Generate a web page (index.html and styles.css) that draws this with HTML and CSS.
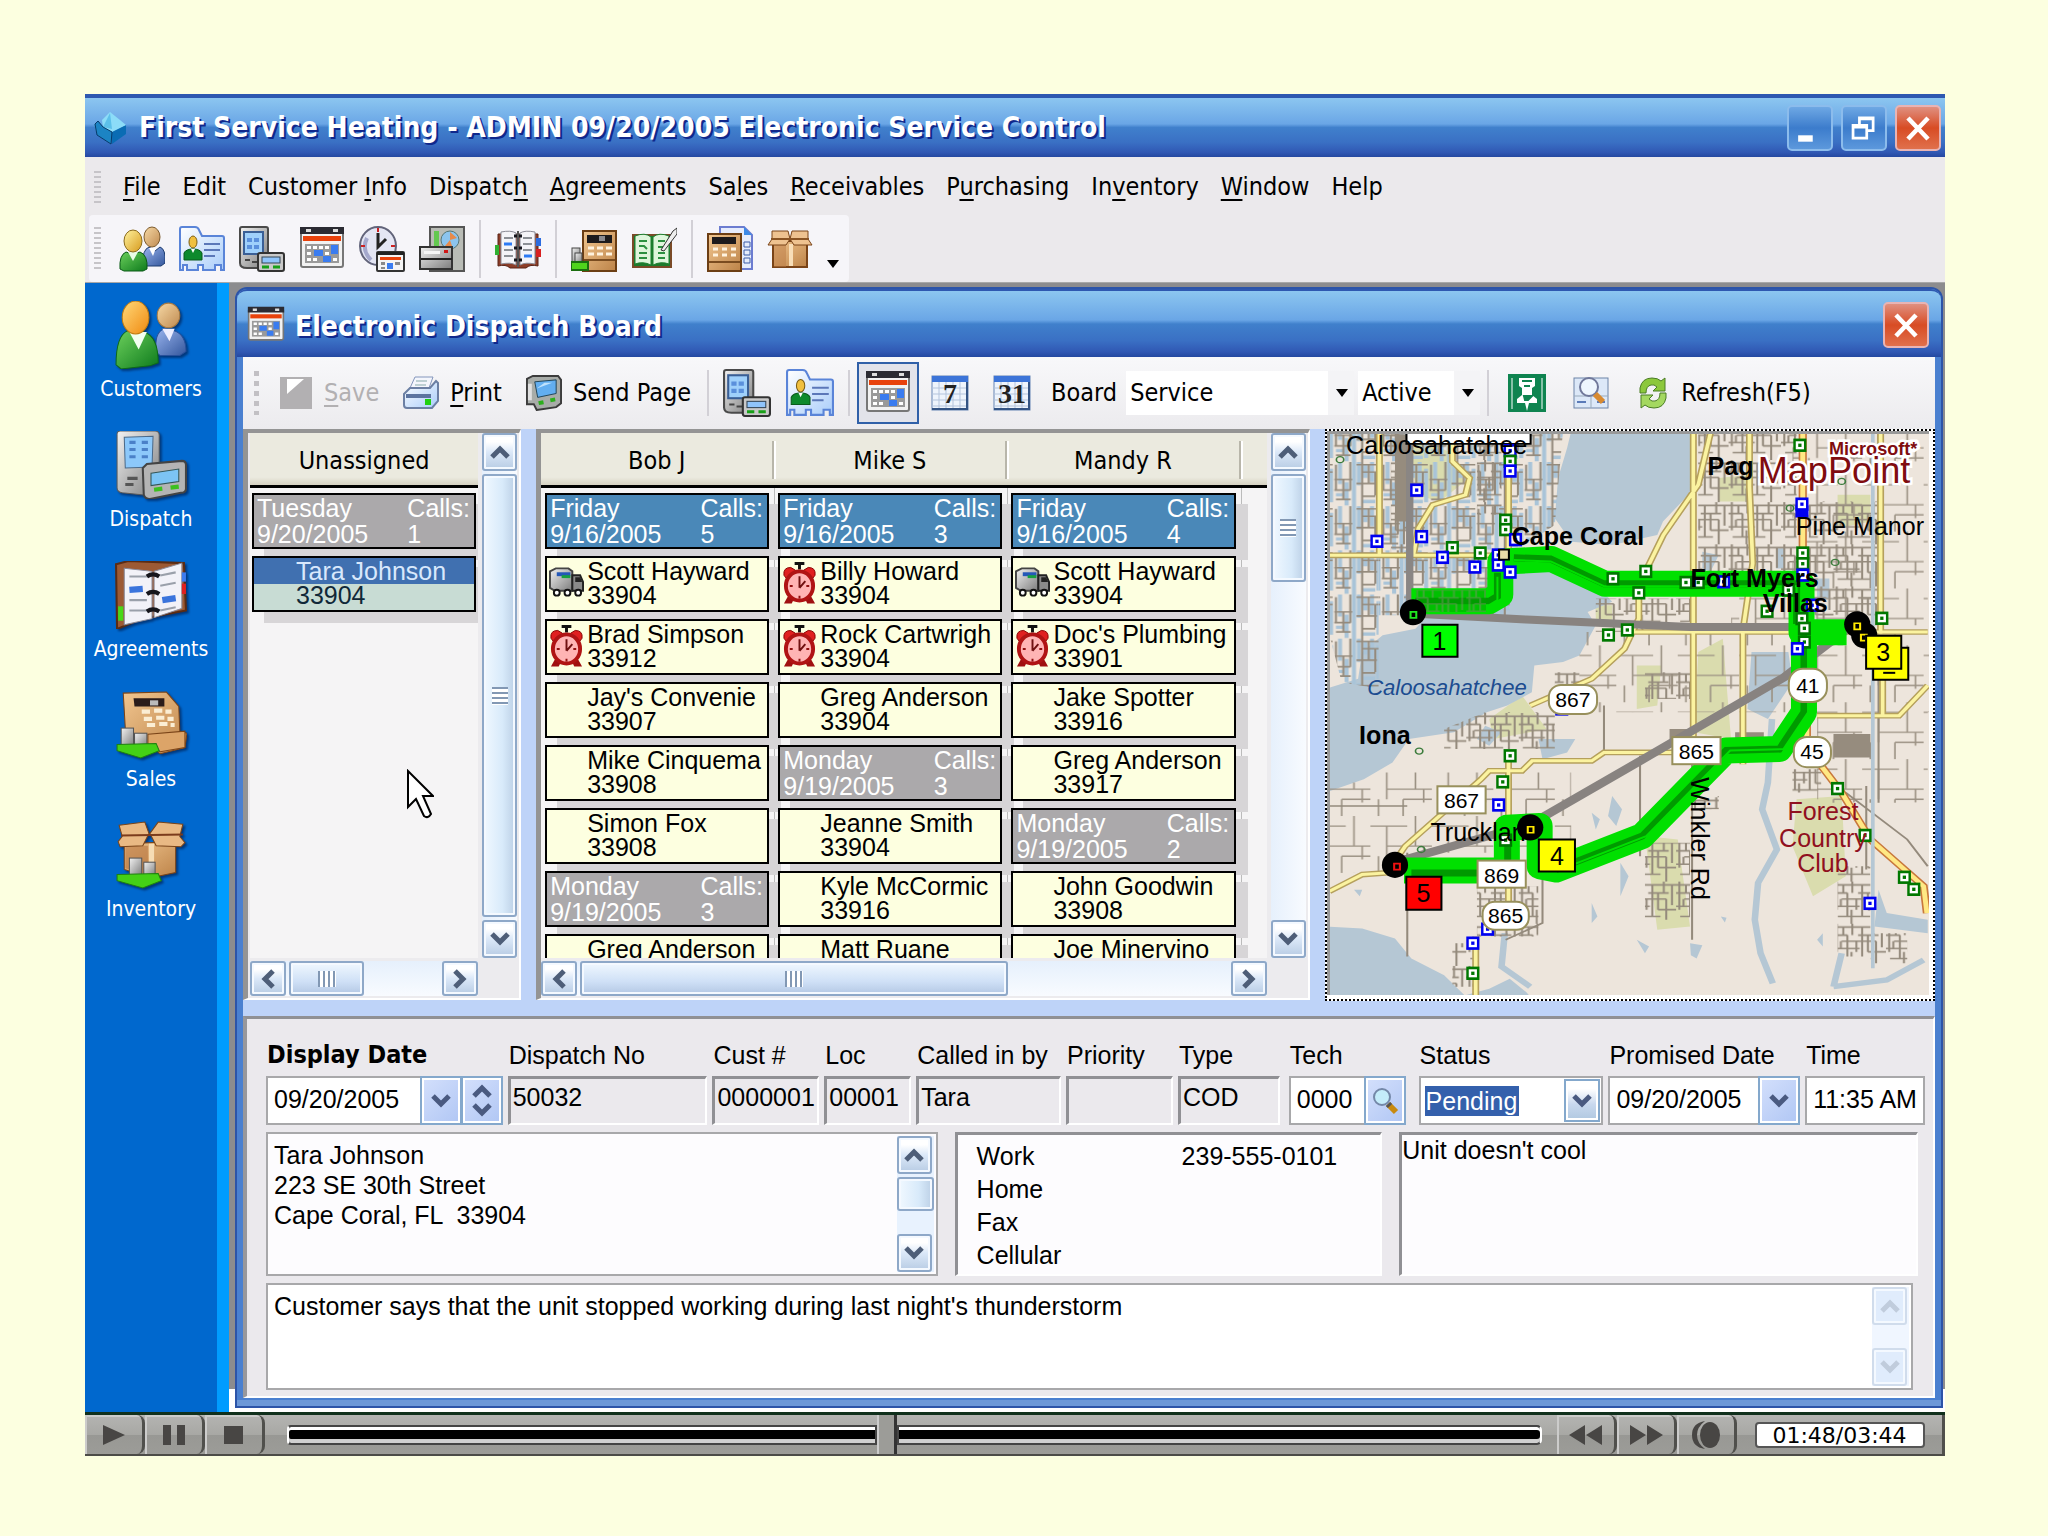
FILE: index.html
```html
<!DOCTYPE html>
<html lang="en">
<head>
<meta charset="utf-8">
<title>First Service Heating - Electronic Service Control</title>
<link rel="stylesheet" href="styles.css">
</head>
<body>
<svg class="defs" aria-hidden="true">
  <defs>
    <linearGradient id="gold" x1="0" y1="0" x2="1" y2="1"><stop offset="0" stop-color="#fff3a0"/><stop offset="1" stop-color="#d79a1c"/></linearGradient>
    <linearGradient id="orange" x1="0" y1="0" x2="1" y2="1"><stop offset="0" stop-color="#ffd97a"/><stop offset="1" stop-color="#f08a10"/></linearGradient>
    <linearGradient id="skin" x1="0" y1="0" x2="1" y2="1"><stop offset="0" stop-color="#f6d9a6"/><stop offset="1" stop-color="#c08a50"/></linearGradient>
    <linearGradient id="green" x1="0" y1="0" x2="1" y2="1"><stop offset="0" stop-color="#6cd05c"/><stop offset="1" stop-color="#0d7a1c"/></linearGradient>
    <linearGradient id="coat" x1="0" y1="0" x2="1" y2="1"><stop offset="0" stop-color="#9ab4ee"/><stop offset="1" stop-color="#34579c"/></linearGradient>
    <linearGradient id="card" x1="0" y1="0" x2="1" y2="1"><stop offset="0" stop-color="#ffffff"/><stop offset="1" stop-color="#a9cdfa"/></linearGradient>
    <linearGradient id="steel" x1="0" y1="0" x2="1" y2="1"><stop offset="0" stop-color="#f2f2f2"/><stop offset="1" stop-color="#7c7c7c"/></linearGradient>
    <linearGradient id="wood" x1="0" y1="0" x2="1" y2="1"><stop offset="0" stop-color="#f1c690"/><stop offset="1" stop-color="#bd8348"/></linearGradient>
  </defs>
  <symbol id="i-people" viewBox="0 0 46 46">
    <path d="M24 38q-1-14 6-17l6 4 5-4q6 2 5 16l-4 3H26z" fill="url(#coat)" stroke="#1d3c70"/>
    <ellipse cx="33" cy="11" rx="8" ry="10" fill="url(#skin)" stroke="#7c5a2c"/>
    <path d="M30 22l4 8 3-8z" fill="#fff"/>
    <path d="M1 43Q0 29 7 26l6 2 8-2q8 3 7 17l-4 2H5z" fill="url(#green)" stroke="#0a5a16"/>
    <path d="M9 26l5 9 5-9z" fill="#e8fbe6"/>
    <ellipse cx="14" cy="15" rx="9" ry="11" fill="url(#gold)" stroke="#8a6a1c"/>
  </symbol>
  <symbol id="i-idcard" viewBox="0 0 46 46">
    <path d="M1 3q0-2 2-2h13q3 0 4 3l3 6h20q2 0 2 2v32h-3v-5h-6v5H24v-5h-5v5H8v-5H4v5H1z" fill="url(#card)" stroke="#5a84d8" stroke-width="2"/>
    <ellipse cx="14" cy="16" rx="4" ry="6" fill="#f0c040" stroke="#7a5c14"/>
    <path d="M5 34V27q2-4 9-4t9 4v7z" fill="#0d8a2c" stroke="#0a5a1c"/><path d="M12 23l2 4 2-4z" fill="#fff"/>
    <path d="M25 18h16M25 24h16M25 30h11" stroke="#5b77b8" stroke-width="2"/>
  </symbol>
  <symbol id="i-pda" viewBox="0 0 46 46">
    <path d="M1 3q0-2 2-2h24q2 0 2 2v34q0 5-5 5H8q-7 0-7-5z" fill="url(#steel)" stroke="#4a4a4a" stroke-width="2"/>
    <rect x="5" y="6" width="19" height="22" fill="#9fd0fb" stroke="#3a5f96" stroke-width="2"/>
    <path d="M8 12h5v4H8zM15 12h5v4h-5zM8 19h5v4H8zM15 19h5v4h-5z" fill="#5b90dc"/>
    <path d="M6 34h5M13 36h6" stroke="#444" stroke-width="2"/>
    <rect x="19" y="27" width="26" height="18" rx="2" fill="#c9c9c9" stroke="#333" stroke-width="2"/>
    <rect x="23" y="31" width="18" height="6" fill="#8fc4fb" stroke="#345" />
    <path d="M23 41h7M34 41h7" stroke="#18a018" stroke-width="3"/>
  </symbol>
  <symbol id="i-calendar" viewBox="0 0 46 46">
    <rect x="2" y="3" width="42" height="38" rx="2" fill="#f2f2f2" stroke="#777" stroke-width="2"/>
    <path d="M1 1h44v7H1z" fill="#2b2b33"/><path d="M7 3h5v3H7zM34 3h5v3h-5z" fill="#ddd"/>
    <rect x="4" y="10" width="38" height="5" fill="#e8420c"/>
    <rect x="6" y="18" width="34" height="19" fill="#9a9a9a"/>
    <path d="M8 20h4v3H8zM14 20h4v3h-4zM20 20h4v3h-4zM26 20h4v3h-4zM8 26h4v3H8zM26 26h4v3h-4zM8 32h4v3H8zM14 32h4v3h-4zM34 32h4v3h-4z" fill="#fff"/>
    <path d="M15 24h9v6h-9zM32 19h7v9h-7zM24 30h8v6h-8z" fill="#3a7cf0"/>
  </symbol>
  <symbol id="i-clock" viewBox="0 0 46 46">
    <ellipse cx="19" cy="20" rx="18" ry="19" fill="#e4e6f4" stroke="#62647a" stroke-width="2"/>
    <path d="M8 12Q2 24 12 34" stroke="#a4a8cc" stroke-width="4" fill="none"/>
    <path d="M19 7v14l8-8" stroke="#222" stroke-width="3" fill="none"/>
    <path d="M19 2v4M2 20h4M32 20h4" stroke="#c22" stroke-width="2"/>
    <rect x="18" y="26" width="27" height="19" rx="1" fill="#f4f4f4" stroke="#333" stroke-width="2"/>
    <path d="M18 26h27v3H18z" fill="#222"/><path d="M21 31h21v3H21z" fill="#e8420c"/>
    <path d="M22 36h4v3h-4zM22 41h4v2h-4zM36 36h5v3h-5z" fill="#8a8a8a"/><path d="M28 37h6v6h-6z" fill="#3a7cf0"/>
  </symbol>
  <symbol id="i-report" viewBox="0 0 46 46">
    <rect x="11" y="1" width="34" height="44" fill="#b9bcb6" stroke="#555" stroke-width="2"/>
    <rect x="15" y="5" width="5" height="22" fill="#63c850"/>
    <circle cx="31" cy="14" r="9" fill="#8cc4ee" stroke="#577"/><path d="M31 14V6l7 6zM31 14l-5 6 8 3z" fill="#e88a4a"/>
    <path d="M1 21h32v22H1z" fill="url(#steel)" stroke="#333" stroke-width="2"/>
    <path d="M5 25h16v3H5z" fill="#f6f6f6"/><path d="M25 24h4v3h-4z" fill="#d01818"/><path d="M2 33h31" stroke="#222" stroke-width="2"/>
  </symbol>
  <symbol id="i-book" viewBox="0 0 46 46">
    <path d="M3 8h40v32q-8-2-12 2H15q-4-4-12-2z" fill="#8c3d28" stroke="#5a2416"/>
    <path d="M6 6q10-2 15 1v32q-5-3-15-1zM40 6Q30 4 25 7v32q5-3 15-1z" fill="#f4f4f8" stroke="#8a8a94"/>
    <path d="M9 12h9M9 24h9M9 30h9M28 12h9M28 18h9M28 24h9" stroke="#8c9096" stroke-width="2"/>
    <path d="M9 18h8M29 30h8" stroke="#2c7af4" stroke-width="3"/>
    <path d="M19 10h8M19 22h8M19 34h8" stroke="#16161c" stroke-width="3"/><path d="M23 5v36" stroke="#555" stroke-width="2"/>
    <path d="M41 12h5v8h-5z" fill="#2c6ce0"/><path d="M41 23h5v8h-5z" fill="#d82020"/><path d="M0 19h4v10H0z" fill="#30b030"/>
  </symbol>
  <symbol id="i-register" viewBox="0 0 46 46">
    <path d="M12 5h33v40H12z" fill="url(#wood)" stroke="#6c3e14" stroke-width="2"/>
    <rect x="16" y="9" width="25" height="8" fill="#1d1a1c"/><path d="M28 10h6v5h-6z" fill="#8a8a90"/>
    <path d="M17 22h6M26 22h6M35 22h6M17 28h6M26 28h6M35 28h6" stroke="#fff3e0" stroke-width="3"/>
    <path d="M13 34h31" stroke="#7a4c20" stroke-width="2"/>
    <rect x="1" y="22" width="8" height="14" fill="url(#steel)" stroke="#444"/><rect x="4" y="27" width="7" height="10" fill="url(#steel)" stroke="#444"/>
    <path d="M0 36h17v8H0z" fill="#4fd41c" stroke="#1b6e10" stroke-width="2"/>
  </symbol>
  <symbol id="i-ledger" viewBox="0 0 46 46">
    <path d="M2 9h38v32H2z" fill="#1c7a2c" stroke="#7a4a28" stroke-width="2"/>
    <path d="M4 10q10-4 16 1v28q-8-4-16-1zM38 10q-10-4-16 1v28q8-4 16-1z" fill="#dff6dc" stroke="#1d8030"/>
    <path d="M8 15h8M8 20h5l3 3M8 27h8M8 32h8M27 15h7M27 21h5M27 27h7M27 32h7" stroke="#2c9040" stroke-width="2" fill="none"/>
    <path d="M30 24L42 5l4-3v6L33 25z" fill="#eee" stroke="#333"/>
  </symbol>
  <symbol id="i-invoice" viewBox="0 0 46 46">
    <path d="M13 1h24l8 8v34H13z" fill="#e6ecfc" stroke="#6c7cd0" stroke-width="2"/><path d="M37 1v8h8z" fill="#3c8ae8"/>
    <path d="M37 16h6v5h-6zM37 24h6v5h-6zM37 32h6v5h-6z" fill="none" stroke="#3c5ca8"/>
    <path d="M1 8h33v37H1z" fill="url(#wood)" stroke="#6c3e14" stroke-width="2"/>
    <rect x="5" y="11" width="24" height="7" fill="#1d1a1c"/>
    <path d="M6 23h5M15 23h5M24 23h5M6 29h5M15 29h5M24 29h5" stroke="#fff3e0" stroke-width="3"/><path d="M2 36h31" stroke="#7a4c20" stroke-width="2"/>
  </symbol>
  <symbol id="i-box" viewBox="0 0 46 46">
    <path d="M6 15h34v26H6z" fill="url(#wood)" stroke="#7a4418" stroke-width="2"/><path d="M7 17h12v24H7z" fill="#b97a44" opacity=".5"/>
    <path d="M5 5h16l2 8-4 6H1l4-6zM41 5H25l-2 8 4 6h18l-4-6z" fill="#eec290" stroke="#7a4418"/>
    <path d="M4 13h38" stroke="#8a5424" stroke-width="2"/><path d="M22 18h4v22h-4z" fill="#f8deb8"/>
  </symbol>
  <symbol id="i-register-lg" viewBox="0 0 70 66">
    <path d="M8 2l42-1 12 14 1 24 7 2-2 14-24 6L10 36z" fill="url(#wood)" stroke="#7a4418"/>
    <path d="M18 7h30v8H19z" fill="#2b1c1a"/><path d="M34 9h8v5h-8z" fill="#bbb"/>
    <path d="M26 20h8M38 19h8M49 20h6M28 27h8M40 26h8M51 27h6M31 33h8M43 32h8M54 33h4" stroke="#fbeed4" stroke-width="4"/>
    <path d="M32 42l36-3v16l-24 4-12-6z" fill="#dca468" stroke="#7a4418"/>
    <rect x="6" y="36" width="12" height="18" fill="url(#steel)" stroke="#555"/><rect x="19" y="41" width="12" height="14" fill="url(#steel)" stroke="#555"/>
    <path d="M2 52l38-1 3 7-18 7L2 58z" fill="#44d016" stroke="#1f8010"/>
  </symbol>
  <symbol id="i-box-lg" viewBox="0 0 70 66">
    <path d="M9 22l50-2v30l-24 5-26-8z" fill="url(#wood)" stroke="#7a4418"/>
    <path d="M10 24h22v28l-22-6z" fill="#b3703a" opacity=".55"/><path d="M33 22h5v30h-5z" fill="#f6dcb4"/>
    <path d="M4 4l25-3 4 11-6 12-22 1-2-5 4-5zM66 3L42 1l-8 11 6 12 24 1 4-4-5-6z" fill="#e9b984" stroke="#7a4418"/>
    <path d="M6 14l60-1" stroke="#7c3c1c" stroke-width="2"/>
    <rect x="14" y="36" width="12" height="17" fill="url(#steel)" stroke="#555"/><rect x="28" y="40" width="11" height="14" fill="url(#steel)" stroke="#555"/>
    <path d="M2 52l40-1 3 7-18 7L2 58z" fill="#44d016" stroke="#1f8010"/>
  </symbol>
  <symbol id="i-people-lg" viewBox="0 0 70 66">
    <path d="M40 50q-2-20 8-23l10 2q11 4 11 20l-6 4H44z" fill="url(#coat)" stroke="#28509a"/><path d="M46 27l7 12 5-12z" fill="#eef"/>
    <ellipse cx="52" cy="14" rx="11" ry="12" fill="url(#skin)" stroke="#a87a40"/>
    <path d="M1 62Q1 34 12 29l16 1q14 4 14 30l-8 3-28 3z" fill="url(#green)" stroke="#0e6a18"/><path d="M14 30l9 17 8-17z" fill="#f2fff0"/>
    <ellipse cx="20" cy="16" rx="13" ry="16" fill="url(#orange)" stroke="#c07c10"/>
  </symbol>
  <symbol id="i-pda-lg" viewBox="0 0 70 66">
    <path d="M2 3q0-3 3-3h34q4 0 4 4v52q0 7-8 7l-28-3q-5-1-5-5z" fill="url(#steel)" stroke="#5a5a5a"/>
    <path d="M9 6l28-1-1 30-26 1z" fill="#8cc8fa" stroke="#4a6a8a"/><path d="M14 11h6M14 18h6M14 25h6M26 11h6M26 18h6M26 25h6" stroke="#4a80c8" stroke-width="3"/>
    <path d="M12 46h10M10 52h8" stroke="#555" stroke-width="3"/>
    <path d="M27 36l4-4 34-3q4 0 4 4v23q0 4-5 4l-30 6q-5 0-6-4z" fill="#b4b4b4" stroke="#444" stroke-width="2"/>
    <path d="M35 41l27-4v12l-27 4z" fill="#7cc4f4" stroke="#355"/><path d="M38 57l8-1M54 55l8-1" stroke="#3cc020" stroke-width="4"/>
  </symbol>
  <symbol id="i-book-lg" viewBox="0 0 70 66">
    <path d="M1 3l12-3 54 2 2 46-42 8L2 66z" fill="#9c5a34" stroke="#5a2c14" stroke-width="2"/>
    <path d="M9 7l27 3v46L9 62zM38 10l27-8v44l-27 9z" fill="#f2f2f8" stroke="#8a8a98"/>
    <path d="M14 15h17M14 38h17M14 48h17M44 14l15-3M44 24l15-3M44 48l15-3" stroke="#9aa0aa" stroke-width="2"/>
    <path d="M14 28l13-1M46 38l13-2" stroke="#3a74dc" stroke-width="6"/>
    <path d="M31 15q6-4 12 0M31 32q6-4 12 0M31 49q6-4 12 0" stroke="#16161c" stroke-width="4" fill="none"/>
    <path d="M65 11h4v9h-4z" fill="#3c7cf0"/><path d="M65 22h4v10h-4z" fill="#e02020"/><path d="M3 44h5v14H3z" fill="#48d818"/>
  </symbol>
  <symbol id="i-cube" viewBox="0 0 34 34">
    <path d="M1 13l9 4 8 16-14-9z" fill="#3aa4dc"/><path d="M33 14v9L19 33l-1-13z" fill="#0a6cb4"/><path d="M17 1l10 8 6 5-14 7-9-4-1-8z" fill="#8cdcf8"/><path d="M17 2l2 16-9-2z" fill="#5cc0ea"/><path d="M2 13l3-3 5 6 9 5-1 12L4 24z" fill="#1c84c4" stroke="#073a6a"/>
  </symbol>
  <symbol id="i-save" viewBox="0 0 34 34"><path d="M1 1h32v32H1z" fill="#b2b0b2"/><path d="M8 3h17L8 18z" fill="#fff"/></symbol>
  <symbol id="i-printer" viewBox="0 0 36 34">
    <path d="M12 1h18l-4 11H7z" fill="#f4f6fc" stroke="#8496bc"/><path d="M13 5h11M12 9h11" stroke="#8aa" />
    <path d="M1 18l6-6h20l6-7 2 2v18l-6 7H4q-3 0-3-3z" fill="url(#card)" stroke="#6c80a4" stroke-width="2"/><path d="M3 18h25v4H3z" fill="#5c74a0"/><path d="M22 23h6v6h-6z" fill="#20d010"/>
  </symbol>
  <symbol id="i-send" viewBox="0 0 37 37">
    <path d="M1 4l6-3h26l3 4v24l-5 4-20 3-3-6H1z" fill="#a8aca8" stroke="#3c3c3c" stroke-width="2"/><path d="M9 7l22-2v14l-19 4z" fill="#62aef0" stroke="#245"/><path d="M11 14l8-6h8z" fill="#bfe2fc"/><path d="M13 29l5-1M25 26l5-1" stroke="#2cae1c" stroke-width="4"/><path d="M2 9h4v17H2z" fill="#e0e0e0"/>
  </symbol>
  <symbol id="i-grid" viewBox="0 0 38 36">
    <rect x="1" y="1" width="36" height="34" fill="#eef4fc" stroke="#6484b4"/><path d="M1 1h36v6H1z" fill="#3c74d8"/>
    <path d="M8 7v28M15 7v28M22 7v28M29 7v28M1 13h36M1 19h36M1 25h36M1 31h36" stroke="#b4c4dc"/><path d="M1 34h36M36 7v28" stroke="#345484" stroke-width="2"/>
  </symbol>
  <symbol id="i-pin" viewBox="0 0 38 38">
    <rect width="38" height="38" fill="#0f8450"/><path d="M11 4h16v8l-3 2v7l5 4v4h-8l-2 8-2-8H9v-4l5-4v-7l-3-2z" fill="#fff"/><path d="M14 7h10M16 12h6M16 22h8l-4 4h-3z" stroke="#0f8450" stroke-width="2" fill="#0f8450"/><path d="M4 35V4M34 35V4" stroke="#fff"/>
  </symbol>
  <symbol id="i-find" viewBox="0 0 38 34">
    <rect x="2" y="2" width="34" height="30" fill="#dce8f8" stroke="#6c84a8"/><path d="M19 2v30M2 20h34" stroke="#9ab"/><path d="M5 26h9M25 26h8" stroke="#5a7ab8" stroke-width="2"/>
    <circle cx="17" cy="11" r="9" fill="#eef6fe" stroke="#70789a" stroke-width="2"/><path d="M23 18l8 8" stroke="#d88a30" stroke-width="6"/>
  </symbol>
  <symbol id="i-refresh" viewBox="0 0 30 34">
    <path d="M2 17V12Q4 2 14 2q6 0 9 3l4-3v13H15l4-4q-3-3-6-2-5 1-5 8z" fill="#8cc83c" stroke="#4a7c24"/><path d="M28 17v5q-2 10-12 10-6 0-9-3l-4 3V19h12l-4 4q3 3 6 2 5-1 5-8z" fill="#a4d860" stroke="#4a7c24"/>
  </symbol>
  <symbol id="i-lens" viewBox="0 0 28 28"><circle cx="11" cy="10" r="8" fill="#c4ecfa" stroke="#7488a8" stroke-width="2"/><path d="M17 17l8 8" stroke="#c88a10" stroke-width="6"/><path d="M17 17l2 2" stroke="#555" stroke-width="6"/></symbol>
  <symbol id="i-truck" viewBox="0 0 36 30">
    <path d="M1 4l6-3h13l4 3v20H6l-5-3z" fill="url(#steel)" stroke="#444" stroke-width="2"/><path d="M8 5h14v4H8z" fill="#2458b8"/><path d="M13 8h9v3h-9z" fill="#18a040"/>
    <path d="M24 8h8l3 7v9H24z" fill="#8a8a8a" stroke="#222" stroke-width="2"/><path d="M27 10h5l2 5h-7z" fill="#222"/><circle cx="8" cy="26" r="3" fill="#fff" stroke="#111" stroke-width="2"/><circle cx="19" cy="26" r="3" fill="#fff" stroke="#111" stroke-width="2"/><circle cx="30" cy="26" r="3" fill="#fff" stroke="#111" stroke-width="2"/>
  </symbol>
  <symbol id="i-alarm" viewBox="0 0 36 44">
    <path d="M13 2h10M18 2v6" stroke="#111" stroke-width="3"/><path d="M6 36l-4 7h8l3-6zM30 36l4 7h-8l-3-6z" fill="#a01010"/>
    <path d="M2 14Q1 6 9 6l5 3-9 9zM34 14q1-8-7-8l-5 3 9 9z" fill="#e02020" stroke="#800" />
    <ellipse cx="18" cy="25" rx="14" ry="15" fill="#ffb4b4" stroke="#b01414" stroke-width="4"/><path d="M18 15v12M18 27l6-7" stroke="#701010" stroke-width="2"/><path d="M8 25h3M25 25h3M18 35v3" stroke="#901010" stroke-width="2"/>
  </symbol>
  <symbol id="c-up" viewBox="0 0 20 14"><path d="M2 12l8-8 8 8" fill="none" stroke="currentColor" stroke-width="5"/></symbol>
  <symbol id="c-down" viewBox="0 0 20 14"><path d="M2 2l8 8 8-8" fill="none" stroke="currentColor" stroke-width="5"/></symbol>
  <symbol id="c-left" viewBox="0 0 14 20"><path d="M12 2l-8 8 8 8" fill="none" stroke="currentColor" stroke-width="5"/></symbol>
  <symbol id="c-right" viewBox="0 0 14 20"><path d="M2 2l8 8-8 8" fill="none" stroke="currentColor" stroke-width="5"/></symbol>
</svg>

<div class="app">
  <header class="titlebar main-title">
    <svg class="cube"><use href="#i-cube"/></svg>
    <h1>First Service Heating - ADMIN 09/20/2005 Electronic Service Control</h1>
    <div class="win-buttons">
      <button class="wb" aria-label="Minimize"><svg viewBox="0 0 46 46"><path d="M10 31h16v7H10z" fill="#fff"/></svg></button>
      <button class="wb" aria-label="Restore"><svg viewBox="0 0 46 46"><path d="M18 20v-8h15v14h-6M18 13h15" fill="none" stroke="#fff" stroke-width="3"/><path d="M11 20h15v14H11zM11 22h15" fill="none" stroke="#fff" stroke-width="3"/></svg></button>
      <button class="wb close" aria-label="Close"><svg viewBox="0 0 46 46"><path d="M12 12l22 23M34 12L12 35" stroke="#fff" stroke-width="5"/></svg></button>
    </div>
  </header>

  <nav class="menubar" aria-label="Main menu">
    <span class="grip"></span>
    <button><span><u>F</u>ile</span></button><button>Edit</button><button><span>Customer <u>I</u>nfo</span></button><button><span>Dispatc<u>h</u></span></button><button><span><u>A</u>greements</span></button><button><span>Sa<u>l</u>es</span></button><button><span><u>R</u>eceivables</span></button><button><span>P<u>u</u>rchasing</span></button><button><span>In<u>v</u>entory</span></button><button><span><u>W</u>indow</span></button><button>Help</button>
  </nav>

  <div class="toolrow">
    <div class="toolbar" role="toolbar" aria-label="Shortcuts">
      <span class="grip tall"></span>
      <button aria-label="Customers"><svg><use href="#i-people"/></svg></button>
      <button aria-label="Contacts"><svg><use href="#i-idcard"/></svg></button>
      <button aria-label="Dispatch"><svg><use href="#i-pda"/></svg></button>
      <button aria-label="Calendar"><svg><use href="#i-calendar"/></svg></button>
      <button aria-label="Schedule"><svg><use href="#i-clock"/></svg></button>
      <button aria-label="Reports"><svg><use href="#i-report"/></svg></button>
      <i class="sep"></i>
      <button aria-label="Agreements"><svg><use href="#i-book"/></svg></button>
      <i class="sep"></i>
      <button aria-label="Sales"><svg><use href="#i-register"/></svg></button>
      <button aria-label="Ledger"><svg><use href="#i-ledger"/></svg></button>
      <i class="sep"></i>
      <button aria-label="Invoices"><svg><use href="#i-invoice"/></svg></button>
      <button aria-label="Inventory"><svg><use href="#i-box"/></svg></button>
      <button class="more" aria-label="More"><svg viewBox="0 0 12 8"><path d="M0 0h12L6 8z"/></svg></button>
    </div>
  </div>

  <div class="workspace">
    <nav class="sidebar" aria-label="Modules">
      <a href="#customers"><svg><use href="#i-people-lg"/></svg>Customers</a>
      <a href="#dispatch"><svg><use href="#i-pda-lg"/></svg>Dispatch</a>
      <a href="#agreements"><svg><use href="#i-book-lg"/></svg>Agreements</a>
      <a href="#sales"><svg><use href="#i-register-lg"/></svg>Sales</a>
      <a href="#inventory"><svg><use href="#i-box-lg"/></svg>Inventory</a>
    </nav>

    <main class="child">
      <header class="titlebar child-title">
        <svg class="cal"><use href="#i-calendar"/></svg>
        <h2>Electronic Dispatch Board</h2>
        <div class="win-buttons"><button class="wb close" aria-label="Close board"><svg viewBox="0 0 46 46"><path d="M12 12l22 23M34 12L12 35" stroke="#fff" stroke-width="5"/></svg></button></div>
      </header>

      <div class="child-tools" role="toolbar" aria-label="Board tools">
        <span class="grip dots"></span>
        <div class="tgroup actions">
          <button disabled><svg class="ic34"><use href="#i-save"/></svg><span><u>S</u>ave</span></button>
          <button><svg class="ic36"><use href="#i-printer"/></svg><span><u>P</u>rint</span></button>
          <button><svg class="ic36"><use href="#i-send"/></svg><span>Send Page</span></button>
        </div>
        <i class="sep"></i>
        <div class="tgroup">
          <button aria-label="Pager"><svg class="ic48"><use href="#i-pda"/></svg></button>
          <button aria-label="Contact"><svg class="ic48"><use href="#i-idcard"/></svg></button>
        </div>
        <i class="sep"></i>
        <div class="tgroup views">
          <button class="on" aria-label="Day board"><svg class="ic46"><use href="#i-calendar"/></svg></button>
          <button class="num"><svg class="ic38"><use href="#i-grid"/></svg><b>7</b></button>
          <button class="num"><svg class="ic38"><use href="#i-grid"/></svg><b>31</b></button>
        </div>
        <label class="board-label" for="board">Board</label>
        <div class="combo wide"><select id="board"><option>Service</option></select><svg viewBox="0 0 12 8"><path d="M0 0h12L6 8z"/></svg></div>
        <div class="combo"><select aria-label="Filter"><option>Active</option></select><svg viewBox="0 0 12 8"><path d="M0 0h12L6 8z"/></svg></div>
        <i class="sep"></i>
        <div class="tgroup last">
          <button aria-label="Map pin"><svg class="ic38"><use href="#i-pin"/></svg></button>
          <button aria-label="Find"><svg class="ic38"><use href="#i-find"/></svg></button>
          <button><svg class="ic34"><use href="#i-refresh"/></svg><span>Refresh(F5)</span></button>
        </div>
      </div>

      <div class="boards">
        <section class="panel un">
          <div class="list">
            <div class="heads one"><span>Unassigned</span></div>
            <div class="cols one">
              <ul>
                <li class="card day gray"><span>Tuesday</span><span>Calls:</span><span>9/20/2005</span><span>1</span></li>
                <li class="card picked"><b>Tara Johnson</b><span>33904</span></li>
              </ul>
            </div>
            <svg class="pointer" viewBox="0 0 28 50"><path d="M2 2v36l8-8 8 17q4 3 7-2L17 27h10z" fill="#fff" stroke="#000" stroke-width="2"/></svg>
          </div>
          <div class="vscroll full"><button aria-label="Scroll up"><svg><use href="#c-up"/></svg></button><div class="thumb"><i class="ridge"></i></div><button aria-label="Scroll down"><svg><use href="#c-down"/></svg></button></div>
          <div class="hscroll short"><button aria-label="Scroll left"><svg><use href="#c-left"/></svg></button><div class="thumb"><i class="ridge"></i></div><button aria-label="Scroll right"><svg><use href="#c-right"/></svg></button></div>
        </section>

        <section class="panel techs">
          <div class="list">
            <div class="heads"><span>Bob J</span><span>Mike S</span><span>Mandy R</span></div>
            <div class="cols">
              <ul>
                <li class="card day"><span>Friday</span><span>Calls:</span><span>9/16/2005</span><span>5</span></li>
                <li class="card"><svg class="truck"><use href="#i-truck"/></svg><b>Scott Hayward</b><span>33904</span></li>
                <li class="card"><svg class="alarm"><use href="#i-alarm"/></svg><b>Brad Simpson</b><span>33912</span></li>
                <li class="card"><b>Jay's Convenie</b><span>33907</span></li>
                <li class="card"><b>Mike Cinquema</b><span>33908</span></li>
                <li class="card"><b>Simon Fox</b><span>33908</span></li>
                <li class="card day gray"><span>Monday</span><span>Calls:</span><span>9/19/2005</span><span>3</span></li>
                <li class="card"><b>Greg Anderson</b></li>
              </ul>
              <ul>
                <li class="card day"><span>Friday</span><span>Calls:</span><span>9/16/2005</span><span>3</span></li>
                <li class="card"><svg class="alarm"><use href="#i-alarm"/></svg><b>Billy Howard</b><span>33904</span></li>
                <li class="card"><svg class="alarm"><use href="#i-alarm"/></svg><b>Rock Cartwrigh</b><span>33904</span></li>
                <li class="card"><b>Greg Anderson</b><span>33904</span></li>
                <li class="card day gray"><span>Monday</span><span>Calls:</span><span>9/19/2005</span><span>3</span></li>
                <li class="card"><b>Jeanne Smith</b><span>33904</span></li>
                <li class="card"><b>Kyle McCormic</b><span>33916</span></li>
                <li class="card"><b>Matt Ruane</b></li>
              </ul>
              <ul>
                <li class="card day"><span>Friday</span><span>Calls:</span><span>9/16/2005</span><span>4</span></li>
                <li class="card"><svg class="truck"><use href="#i-truck"/></svg><b>Scott Hayward</b><span>33904</span></li>
                <li class="card"><svg class="alarm"><use href="#i-alarm"/></svg><b>Doc's Plumbing</b><span>33901</span></li>
                <li class="card"><b>Jake Spotter</b><span>33916</span></li>
                <li class="card"><b>Greg Anderson</b><span>33917</span></li>
                <li class="card day gray"><span>Monday</span><span>Calls:</span><span>9/19/2005</span><span>2</span></li>
                <li class="card"><b>John Goodwin</b><span>33908</span></li>
                <li class="card"><b>Joe Minervino</b></li>
              </ul>
            </div>
          </div>
          <div class="vscroll top"><button aria-label="Scroll up"><svg><use href="#c-up"/></svg></button><div class="thumb"><i class="ridge"></i></div><button aria-label="Scroll down"><svg><use href="#c-down"/></svg></button></div>
          <div class="hscroll"><button aria-label="Scroll left"><svg><use href="#c-left"/></svg></button><div class="thumb"><i class="ridge"></i></div><button aria-label="Scroll right"><svg><use href="#c-right"/></svg></button></div>
        </section>

        <section class="map" aria-label="Route map">
          <svg viewBox="0 0 597 561" preserveAspectRatio="xMidYMid slice">
            <defs>
              <pattern id="dense" width="128" height="126" patternUnits="userSpaceOnUse"><path d="M0 10h128M0 34h34M60 34h50M20 52h84M0 74h64M84 84h44M10 104h80M8 0v84M24 10v24M34 34v70M46 0v34M56 52v32M18 52v22M70 10v94M84 34v50M98 0v34M104 52v74M118 10v60M44 84v42" fill="none" stroke="#948a7c" stroke-width="5"/></pattern>
              <pattern id="canal" width="116" height="132" patternUnits="userSpaceOnUse"><path d="M6 0v70M22 8v40M38 0v60M54 20v100M76 0v66M92 60v70M110 0v132M12 118h34M66 98h20" fill="none" stroke="#a9c4d8" stroke-width="10"/><path d="M0 8h58M12 30h46M0 64h50M62 52h44M62 84h40M14 0v132M30 8v56M46 30v70M66 8v76M84 52v60M101 0v84M14 102h32M66 112h36" fill="none" stroke="#948a7c" stroke-width="5"/></pattern>
              <pattern id="loose" width="150" height="170" patternUnits="userSpaceOnUse"><path d="M0 30h90M40 30v90M40 90h110M110 0v90M80 120h70M20 120v50M80 120v50M130 90v40" fill="none" stroke="#9c9284" stroke-width="4"/></pattern>
              <g id="mb"><path d="M-16-20h32v40h-32z" fill="#0000f0"/><path d="M-10-12h20v24h-20z" fill="#fff"/><path d="M-4-5h8v10h-8z" fill="#0000f0"/></g>
              <g id="mg"><path d="M-16-20h32v40h-32z" fill="#007800"/><path d="M-10-12h20v24h-20z" fill="#fff"/><path d="M-4-5h8v10h-8z" fill="#007800"/></g>
              <ellipse id="stop" rx="32" ry="39" fill="#000"/>
            </defs>
            <g transform="translate(-21 -15) scale(.4082 .3333)">
              <path d="M40 30h1500v1720H40z" fill="#ede5dc"/>
              <path d="M250 60l90 40 40 90-60 60-60-20zM950 700l60-40 20 300-90-20zM800 740l60 0-10 120-50 10zM1190 1140l110-10 10 240-80 60-50-150zM1000 180l80-10v80h-80zM1290 230l80 0 0 80-80 20zM440 900l80-70 60 100-130 30zM820 1250l80 10 30 260-80 10zM700 560h40v60h-40z" fill="#dadcae"/>
              <path d="M640 40h302l4 60-12 120-70 90-14 40-110 30-100-10-40-70 8-120 22-90zM480 440l130 10 100 60 30 40-60 30 20 40-40 90-40 20-70 10-6 80-60 40-50 20-80 60-110 20-40 70-70 50-94 40V810l80-30 10-80 50-50 80-20 30-40 200-20zM40 1520l90 6 80 30 40 60 80 50 50 60 60-20 50-30 40 40 30 40H40zM1080 700l90 0 10 90-60 110-50-30zM1390 1410l20 70 100 20v40l-130-20z" fill="#b5c7d4"/>
              <path d="M1130 900l-10 190-14 80 36 120-46 100-8 110 14 100 30 90M1300 1600l-20 100M1500 1620l-90 60-130 20M540 1700l-70-60 8-100" fill="none" stroke="#b5c7d4" stroke-width="16"/>
              <path d="M690 1180l20 20-10 30zM760 1330l20 40-20 60zM800 1560l30 20-10 20zM690 1450l14 40-14 20zM1005 1490l14 4-4 14zM930 1570l30 6-14 40-14-10zM110 1410l20 0-6 20zM740 1130l24 40-14 50-20-30zM1240 1560l14-20 0 40zM560 960l90 0-20 40-60 20zM430 920l40 20-30 40-30-20zM1240 480l30 0 0 60-30 10zM1140 390l20 0 0 60-20 0zM960 400l40 10-20 50-20-10z" fill="#b5c7d4"/>
              <path d="M50 40h120v770l-90-20-30-140z" fill="url(#canal)"/>
              <path d="M170 40h450l-20 280-110 90v180H170z" fill="url(#canal)"/>
              <path d="M200 40h46v380h-46zM410 40h60v250h-60z" fill="url(#dense)"/>
              <path d="M950 40h240v420H950zM1220 250h170v370h-170zM700 540h240v100H700zM820 760h110v80H820zM600 760h60v100h-60z" fill="url(#dense)"/>
              <path d="M1180 40h330v580h-330zM660 640h860v240H660zM1240 880h270v270h-270zM170 1060h470v240H170zM50 1090h190v270H50zM1030 500h160v130h-160z" fill="url(#loose)"/>
              <path d="M430 880h170v110H330v-60zM1290 1340h80v270h-80zM410 1400h150v150H410zM940 1130h60v40h-60zM820 1270h110v230H820zM1180 1050h70v70h-70zM350 1570h50v130h-50zM1370 1540h90v90h-90z" fill="url(#dense)"/>
              <path d="M1280 945h90v70h-90zM1040 940h70v50h-70zM880 930h60v50h-60zM210 50h36v260h-36zM1290 640h14v40h-14z" fill="#968c7e"/>
              <path d="M720 860v140M808 1010v300M935 840v720M240 1300v310M1360 1100v250M1390 50v1100M570 1380v130l-90 50M50 1160h190M1310 1120l150 140 50 80" fill="none" stroke="#948a7c" stroke-width="5"/>
              <g id="roads" fill="none" stroke-width="17" stroke="#b5a05c"><path d="M50 411h420M172 45v365M350 45v85l42 50-10 50-80 30-35 70-12 80M487 45v360M938 45v950M1075 45v160l8 230-24 200v400M780 640h730M980 45l-30 155-85 150-60 150v100l-35 90-80 90-150 80M1395 45v600M50 1415l80-50 60-5 45-80 185-200 20-25h80l25-30h145l30-25h170M487 1000v500M407 1550v175M1240 890h200l70-90M1400 890V720"/></g>
              <path d="M50 411h420M172 45v365M350 45v85l42 50-10 50-80 30-35 70-12 80M487 45v360M938 45v950M1075 45v160l8 230-24 200v400M780 640h730M980 45l-30 155-85 150-60 150v100l-35 90-80 90-150 80M1395 45v600M50 1415l80-50 60-5 45-80 185-200 20-25h80l25-30h145l30-25h170M487 1000v500M407 1550v175M1240 890h200l70-90M1400 890V720" fill="none" stroke="#fbf3a0" stroke-width="9"/>
              <path d="M1205 40v400M1215 900v60M1250 1040l50 80 70 140 130 140 8 80" fill="none" stroke="#c8783c" stroke-width="20"/>
              <path d="M1205 40v400M1215 900v60M1250 1040l50 80 70 140 130 140 8 80" fill="none" stroke="#ffe884" stroke-width="12"/>
              <path d="M1376 45v1600" stroke="#b5c7d4" stroke-width="9"/>
              <path d="M246 45v540" stroke="#8a8684" stroke-width="18"/>
              <path d="M250 585l280 18 400 22h280M205 1330l335-115 290-205 330-235 160-150" fill="none" stroke="#888380" stroke-width="24"/>
              <path d="M250 548h190l27-20v-98l125-8 130 74h480v145h110M1208 640v240l-60 110-130 4-205 256-210 100-40-10v-120l-80 5v128H232" fill="none" stroke="#00e000" stroke-width="26" stroke-linejoin="round" vector-effect="non-scaling-stroke"/>
              <path d="M260 548h180l20-15v-70M500 418l90 4 130 74h470v120M1208 640v240l-60 110-130 4-205 256-210 100M485 1250v110H250" fill="none" stroke="#009a00" stroke-width="7" vector-effect="non-scaling-stroke"/>
              <path d="M260 560h180l20-15v-70M500 425l90 4 130 74h470v120M1218 640v240l-60 110-130 4-205 256-210 100" fill="none" stroke="#00e000" stroke-width="2" vector-effect="non-scaling-stroke"/>
              <path d="M262 514h170v66H262z" fill="#00a000" opacity=".5"/><path d="M262 514h170v66H262z" fill="url(#dense)" opacity=".4"/>
              <path d="M238 30h303v48H238z" fill="#fff" stroke="#000" stroke-width="5"/>
              <use href="#mb" x="491" y="98"/><use href="#mg" x="491" y="130"/><use href="#mb" x="491" y="159"/><use href="#mb" x="263" y="216"/><use href="#mb" x="166" y="369"/><use href="#mb" x="275" y="355"/><use href="#mg" x="350" y="388"/><use href="#mb" x="326" y="417"/><use href="#mg" x="418" y="404"/><use href="#mb" x="405" y="446"/><use href="#mg" x="480" y="306"/><use href="#mg" x="480" y="334"/><use href="#mb" x="504" y="364"/><use href="#mb" x="462" y="410"/><use href="#mb" x="462" y="440"/><use href="#mb" x="491" y="461"/>
              <path d="M464 394h24v30h-24z" fill="#eadca8" stroke="#000" stroke-width="5"/>
              <use href="#mg" x="742" y="481"/><use href="#mg" x="822" y="459"/><use href="#mg" x="805" y="523"/><use href="#mg" x="920" y="492"/><use href="#mg" x="950" y="492"/><use href="#mb" x="1012" y="490"/><use href="#mg" x="731" y="649"/><use href="#mg" x="777" y="634"/><use href="#mg" x="1198" y="82"/><path d="M1187 262h32v36h-32z" fill="#0000f0"/><use href="#mb" x="1203" y="258"/><use href="#mg" x="1205" y="404"/><use href="#mg" x="1205" y="436"/><use href="#mb" x="1205" y="470"/><use href="#mb" x="1228" y="560"/><use href="#mg" x="1118" y="578"/><use href="#mg" x="1170" y="515"/><use href="#mg" x="1203" y="600"/><use href="#mg" x="1209" y="629"/><use href="#mg" x="1209" y="670"/><use href="#mb" x="1192" y="690"/><use href="#mg" x="1398" y="599"/>
              <use href="#mb" x="617" y="870"/><use href="#mg" x="491" y="1010"/><use href="#mg" x="473" y="1088"/><use href="#mb" x="463" y="1157"/><use href="#mg" x="480" y="1262"/><use href="#mg" x="1290" y="1108"/><use href="#mg" x="1357" y="1248"/><use href="#mg" x="1453" y="1373"/><use href="#mg" x="1476" y="1409"/><use href="#mb" x="1369" y="1451"/><use href="#mb" x="436" y="1528"/><use href="#mb" x="400" y="1570"/><use href="#mg" x="400" y="1660"/>
              <g fill="none" stroke="#3c7c3c" stroke-width="4"><circle cx="76" cy="125" r="9"/><circle cx="1174" cy="270" r="9"/><circle cx="1284" cy="432" r="9"/><circle cx="269" cy="996" r="9"/><circle cx="274" cy="1290" r="9"/><circle cx="1300" cy="190" r="9"/></g>
              <use href="#stop" x="254" y="581"/><path d="M248 580h14v18h-14z" fill="none" stroke="#20e820" stroke-width="5"/>
              <use href="#stop" x="1338" y="617"/><use href="#stop" x="1355" y="650"/><path d="M1331 614h14v18h-14zM1347 648h14v18h-14z" fill="none" stroke="#ffe800" stroke-width="5"/>
              <use href="#stop" x="540" y="1224"/><path d="M534 1222h14v18h-14z" fill="none" stroke="#ffe800" stroke-width="5"/>
              <use href="#stop" x="210" y="1336"/><path d="M208 1332h14v18h-14z" fill="none" stroke="#f01010" stroke-width="5"/>
            </g>
            <g stroke="#000" stroke-width="2"><path d="M92 191h35v32H92z" fill="#0f0"/><path d="M541 214h35v32h-35z" fill="#ff0"/><path d="M551 239h12" /><path d="M534 202h35v33h-35z" fill="#ff0"/><path d="M208 405h36v32h-36z" fill="#ff0"/><path d="M76 442h35v33H76z" fill="#f00"/></g>
            <g class="shields"><rect x="218" y="251" width="48" height="29" rx="12"/><rect x="457" y="235" width="38" height="33" rx="14"/><rect x="341" y="303" width="48" height="27"/><rect x="462" y="303" width="37" height="30" rx="13"/><rect x="107" y="352" width="48" height="27"/><rect x="147" y="426" width="48" height="27"/><rect x="152" y="467" width="46" height="28" rx="12"/></g>
            <g class="lbl">
              <text x="16" y="21">Caloosahatchee</text><text x="464" y="102">Pine Manor</text><text x="100" y="407">Trucklan</text>
              <text transform="translate(360 343) rotate(90)">Winkler Rd</text>
              <g class="bold"><text x="376" y="42">Pag</text><text x="181" y="112">Cape Coral</text><text x="359" y="154">Fort Myers</text><text x="431" y="178">Villas</text><text x="29" y="310">Iona</text></g>
              <g class="sea"><text x="37" y="261">Caloosahatchee</text></g>
              <g class="park"><text x="491" y="386">Forest</text><text x="491" y="412">Country</text><text x="491" y="437">Club</text></g>
              <g class="mid"><text x="242" y="273">867</text><text x="476" y="259">41</text><text x="365" y="325">865</text><text x="480" y="325">45</text><text x="131" y="374">867</text><text x="171" y="448">869</text><text x="175" y="488">865</text><text class="n" x="109" y="216">1</text><text class="n" x="551" y="227">3</text><text class="n" x="226" y="430">4</text><text class="n" x="93" y="467">5</text></g>
              <text class="ms" x="497" y="22">Microsoft*</text><text class="mp" x="426" y="50">MapPoint</text>
            </g>
          </svg>
        </section>
      </div>

      <form class="detail">
        <div class="fields">
          <div class="field"><label class="strong" for="dd">Display Date</label><div class="box"><input id="dd" value="09/20/2005"><button type="button" class="blue" aria-label="Pick display date"><svg><use href="#c-down"/></svg></button><button type="button" class="blue spin" aria-label="Step display date"><svg><use href="#c-up"/></svg><svg><use href="#c-down"/></svg></button></div></div>
          <div class="field"><label for="dn">Dispatch No</label><input class="ro" id="dn" value="50032" readonly></div>
          <div class="field"><label for="cu">Cust #</label><input class="ro" id="cu" value="0000001" readonly></div>
          <div class="field"><label for="lo">Loc</label><input class="ro" id="lo" value="00001" readonly></div>
          <div class="field"><label for="ca">Called in by</label><input class="ro" id="ca" value="Tara" readonly></div>
          <div class="field"><label for="pr">Priority</label><input class="ro" id="pr" value="" readonly></div>
          <div class="field type"><label for="ty">Type</label><input class="ro" id="ty" value="COD" readonly></div>
          <div class="field tech"><label for="te">Tech</label><div class="box"><input id="te" value="0000"><button type="button" class="blue" aria-label="Look up tech"><svg class="lens"><use href="#i-lens"/></svg></button></div></div>
          <div class="field"><label for="st">Status</label><div class="box status"><select id="st"><option>Pending</option></select><button type="button" class="drop" aria-label="Open status list"><svg><use href="#c-down"/></svg></button></div></div>
          <div class="field"><label for="pd">Promised Date</label><div class="box"><input id="pd" value="09/20/2005"><button type="button" class="blue" aria-label="Pick promised date"><svg><use href="#c-down"/></svg></button></div></div>
          <div class="field"><label for="ti">Time</label><div class="box"><input id="ti" value="11:35 AM"></div></div>
        </div>
        <div class="blocks">
          <div class="box area"><textarea aria-label="Address">Tara Johnson
223 SE 30th Street
Cape Coral, FL  33904</textarea>
            <div class="vscroll mini"><button type="button" aria-label="Scroll address up"><svg><use href="#c-up"/></svg></button><div class="thumb"></div><button type="button" aria-label="Scroll address down"><svg><use href="#c-down"/></svg></button></div></div>
          <div class="sunk phones"><table><tr><th>Work</th><td>239-555-0101</td></tr><tr><th>Home</th><td></td></tr><tr><th>Fax</th><td></td></tr><tr><th>Cellular</th><td></td></tr></table></div>
          <div class="sunk"><textarea aria-label="Problem">Unit doesn't cool</textarea></div>
        </div>
        <div class="box area note"><textarea aria-label="Notes">Customer says that the unit stopped working during last night's thunderstorm</textarea>
          <div class="vscroll mini faint"><button type="button" disabled aria-label="Scroll notes up"><svg><use href="#c-up"/></svg></button><button type="button" disabled aria-label="Scroll notes down"><svg><use href="#c-down"/></svg></button></div></div>
      </form>
    </main>
  </div>

  <footer class="player">
    <button aria-label="Play"><svg viewBox="0 0 24 22"><path d="M1 1l22 10L1 21z"/></svg></button>
    <button aria-label="Pause"><svg viewBox="0 0 24 22"><path d="M1 1h8v20H1zM15 1h8v20h-8z"/></svg></button>
    <button aria-label="Stop"><svg viewBox="0 0 24 22"><path d="M2 2h19v18H2z"/></svg></button>
    <div class="track"><div class="groove before"></div><div class="handle"></div><div class="groove after"></div></div>
    <button aria-label="Rewind"><svg class="seek" viewBox="0 0 36 20"><path d="M17 0v20L1 10zM34 0v20L18 10z"/></svg></button>
    <button aria-label="Fast forward"><svg class="seek" viewBox="0 0 36 20"><path d="M2 0v20l16-10zM19 0v20l16-10z"/></svg></button>
    <button aria-label="Volume"><svg class="moon" viewBox="0 0 30 28"><ellipse cx="19" cy="14" rx="10" ry="13"/><path d="M14 0Q1 2 1 14t13 14Q6 22 6 14T14 0z"/></svg></button>
    <div class="time"><output>01:48/03:44</output></div>
  </footer>
</div>
</body>
</html>
```
FILE: styles.css
```css
* { box-sizing: border-box; }
body {
  margin: 0;
  padding: 94px 103px 80px 85px;
  background: #fcffe0;
  color: #000;
  font: 25px/30px "DejaVu Sans Condensed", "DejaVu Sans", sans-serif;
}
button, input, select, textarea {
  font: inherit; color: inherit; background: none; border: 0; padding: 0; margin: 0;
  min-width: 0; border-radius: 0; appearance: none; outline: 0;
}
button { display: flex; align-items: center; justify-content: center; white-space: nowrap; }
svg { display: block; flex: none; overflow: hidden; }
h1, h2 { margin: 0; font-size: 28px; line-height: 34px; font-weight: bold; color: #fff; text-shadow: 2px 2px 0 #10288c; white-space: nowrap; }
u { text-underline-offset: 4px; text-decoration-thickness: 2px; }
.defs { position: absolute; width: 0; height: 0; }

/* Title bars */
.titlebar {
  display: flex; align-items: center; color: #fff;
  background: linear-gradient(#8cc6f0 0, #6aa6e6 44%, #4080cc 50%, #3a70c4 75%, #3058b4 92%, #2448a0 100%);
  border-top: 4px solid #2e58b0;
}
.main-title { height: 63px; padding: 0 4px 0 8px; gap: 12px; }
.cube { width: 34px; height: 34px; }
.win-buttons { display: flex; gap: 8px; margin-left: auto; }
.wb {
  width: 46px; height: 46px; border-radius: 5px; border: 2px solid #8cbcec;
  background: linear-gradient(#6ea8e4, #3c7ccc 50%, #5c98dc);
}
.wb svg { width: 42px; height: 42px; }
.wb.close { border-color: #e8b4b4; background: linear-gradient(#e09080, #d84c24 50%, #e0704c); }

/* Menu and shortcut toolbar */
.menubar, .toolrow { background: #ebe9ec; }
.menubar { display: flex; align-items: center; height: 58px; padding: 2px 0 0 9px; gap: 22px; }
.grip { width: 7px; height: 32px; background: repeating-linear-gradient(#c6c4c8 0 2px, transparent 2px 5px); }
.grip.tall { height: 44px; }
.toolrow { display: flex; height: 68px; padding-left: 4px; border-bottom: 1px solid #a8a8a8; }
.toolbar { display: flex; align-items: center; gap: 14px; padding: 0 10px 0 5px; background: #f6f5f9; border-radius: 4px; }
.toolbar .grip { margin-right: 4px; }
.toolbar svg { width: 46px; height: 46px; }
.toolbar .more { align-self: flex-end; margin-bottom: 14px; }
.toolbar .more svg { width: 12px; height: 8px; }
.sep { width: 2px; height: 58px; background: #d2d0d6; }

/* Workspace */
.workspace { display: flex; background: linear-gradient(#8c8c8e 98%, #fff 98%); border-bottom: 3px solid #10301c; }
.sidebar { flex: none; width: 144px; padding-top: 18px; background: #0068ce; border-right: 12px solid #009cff; color: #fff; display: flex; flex-direction: column; gap: 16px; }
.sidebar a { display: flex; flex-direction: column; align-items: center; height: 114px; color: #fff; text-decoration: none; font-size: 21px; line-height: 40px; }
.sidebar svg { width: 72px; height: 68px; filter: drop-shadow(2px 2px 1px #00387c); }

.child {
  flex: 1; min-width: 0; margin: 4px 2px 4px 6px; padding: 0 6px 8px 6px;
  background: linear-gradient(#6aa6e6, #4a80d0 60px);
  border-radius: 12px 12px 0 0; border: 2px solid #2c54a8;
  box-shadow: inset 0 -8px 0 -2px #6c98d8;
}
.child-title { height: 68px; margin: 0 -6px; padding: 2px 12px 0 10px; gap: 10px; border-top-width: 2px; border-radius: 10px 10px 0 0; }
.cal { width: 38px; height: 40px; }
.child-title h2 { padding-top: 4px; }

.child-tools { display: flex; align-items: center; height: 72px; padding-left: 11px; background: linear-gradient(#f8f8fa, #ecebee); }
.child-tools .sep { height: 46px; }
.child-tools span { white-space: nowrap; }
.grip.dots { width: 5px; height: 44px; margin-right: 20px; background: repeating-linear-gradient(#c2c0c4 0 5px, transparent 5px 10px); }
.tgroup { display: flex; align-items: center; gap: 15px; margin: 0 14px; }
.tgroup button { gap: 11px; }
.actions { margin: 0 16px 0 0; gap: 24px; }
.actions button:disabled { color: #b2b0b2; }
.views { margin: 0 20px 0 7px; gap: 24px; }
.views .on { width: 62px; height: 62px; margin-right: -12px; border: 2px solid #3060a8; background: #e2e3ea; }
.num { position: relative; }
.num b { position: absolute; inset: 6px 0 0 0; font: bold 28px/28px "Liberation Serif", serif; text-align: center; color: #222; }
.last { margin-left: 19px; gap: 26px; }
.ic34 { width: 34px; height: 34px; } .ic36 { width: 36px; height: 36px; } .ic38 { width: 38px; height: 38px; }
.ic46 { width: 46px; height: 46px; } .ic48 { width: 48px; height: 48px; }
.board-label { margin-right: 9px; }
.combo { display: flex; align-items: center; width: 122px; height: 44px; margin-right: 7px; padding: 0 6px 0 4px; background: #fff; box-shadow: inset -26px 0 0 #f4f4f6; }
.combo.wide { width: 228px; margin-right: 4px; }
.combo select { flex: 1; height: 100%; }
.combo svg { width: 12px; height: 8px; }

/* Boards */
.boards { display: grid; grid-template-columns: 278fr 773fr 610fr; gap: 15px; background: #bed3f8; padding-bottom: 15px; }
.panel {
  display: grid; grid-template: 1fr 35px / 1fr 35px; gap: 3px 4px; height: 571px; min-width: 0;
  padding: 0 2px 2px 0; background: #ecebee;
  border: solid; border-width: 4px 2px 2px 5px; border-color: #949494 #fff #fff #949494;
}
.un { padding-left: 2px; }
.list { min-height: 0; min-width: 0; overflow: hidden; background: #f5f4f5; position: relative; font-family: "Liberation Sans", sans-serif; }
.heads { display: grid; grid-template-columns: 233fr 233fr 233fr 26fr; height: 55px; background: linear-gradient(#ebeadf 85%, #d6d2c2); border-bottom: 3px solid #000; font-family: "DejaVu Sans Condensed", sans-serif; text-align: center; }
.heads span { border-right: 2px solid #b8b6aa; height: 38px; margin-top: 8px; line-height: 40px; box-shadow: 2px 0 0 #fff; }
.heads.one, .cols.one { grid-template-columns: 1fr; }
.heads.one span { border: 0; box-shadow: none; }
.cols { display: grid; grid-template-columns: 233fr 233fr 233fr 26fr; }
.cols ul { list-style: none; margin: 0; padding: 5px 5px 0 4px; display: flex; flex-direction: column; gap: 7px; height: 600px; box-shadow: 1px 0 0 #bbb; }
.cols.one ul { padding: 5px 2px 0 2px; }
.card { position: relative; height: 56px; border: 2px solid #000; background: #fdffe0; padding: 1px 0 0 40px; line-height: 24px; box-shadow: 12px 11px 0 #d7d5d7; white-space: nowrap; }
.card b, .card > span { display: block; font-weight: normal; }
.card svg { position: absolute; left: 2px; }
.truck { top: 8px; width: 35px; height: 32px; }
.alarm { top: 3px; width: 35px; height: 44px; }
.card.day { display: grid; grid-template-columns: 153fr 68fr; padding: 0 0 0 3px; line-height: 26px; color: #fff; background: #4a88b8; }
.card.gray { background: #aba9ab; }
.card.picked { background: linear-gradient(#4070b0 26px, #c8dcd4 26px); color: #102838; padding-left: 42px; }
.card.picked b { color: #d8e8fc; }
.pointer { position: absolute; left: 156px; top: 336px; width: 28px; height: 50px; }

/* Scroll bars */
.vscroll, .hscroll { display: flex; background: linear-gradient(90deg, #e6f0fc, #f8fbff); color: #4e5e78; }
.vscroll { flex-direction: column; gap: 3px; }
.hscroll { gap: 3px; background: linear-gradient(#e6f0fc, #f8fbff); }
.vscroll button, .hscroll button { flex: none; width: 35px; height: 38px; border: 2px solid #8ea8c8; border-radius: 3px; background: linear-gradient(#fff 20%, #dbe8f8 50%, #b8cce4); box-shadow: inset 0 0 0 2px #f4f9ff; }
.hscroll button { width: 36px; height: 35px; }
.vscroll svg { width: 20px; height: 14px; }
.hscroll svg { width: 14px; height: 20px; }
.thumb { display: flex; align-items: center; justify-content: center; border: 2px solid #8ea8c8; border-radius: 3px; background: linear-gradient(90deg, #f0f8ff, #d8eafa 60%, #bcd0e6); box-shadow: inset 0 0 0 2px #f4f9ff; }
.hscroll .thumb { background: linear-gradient(#f0f8ff, #cfe0f6 60%, #b4c8e4); flex: 0 0 59%; margin-right: auto; }
.hscroll.short .thumb { flex-basis: 33%; }
.vscroll.full .thumb { flex: 1; }
.vscroll.top .thumb { height: 108px; margin-bottom: auto; }
.ridge { width: 16px; height: 18px; background: repeating-linear-gradient(#8298b4 0 2px, #fff 2px 5px); }
.hscroll .ridge { width: 18px; height: 16px; background: repeating-linear-gradient(90deg, #8298b4 0 2px, #fff 2px 5px); }

/* Map */
.map { height: 572px; min-width: 0; padding: 0 4px 4px 0; border: 2px dotted #000; background: #fff; }
.map > svg { width: 100%; height: 100%; border: solid #999; border-width: 3px 0 0 3px; }
.lbl { font: 25px "Liberation Sans", sans-serif; }
.lbl .bold { font-weight: bold; }
.lbl .sea { font-style: italic; font-size: 22px; fill: #1c4c90; }
.lbl .park { fill: #901020; text-anchor: middle; }
.mid { text-anchor: middle; font-size: 21px; }
.mid .n { font-size: 25px; }
.shields { fill: #fff; stroke: #98905c; stroke-width: 2; }
.ms, .mp { fill: #800c10; stroke: #fff; stroke-width: 5px; paint-order: stroke; font-weight: bold; font-size: 18px; }
.mp { font-size: 36px; font-weight: normal; }

/* Call detail */
.detail { padding: 21px 8px 6px 19px; background: #ebe9ed; border: solid; border-width: 3px 2px 2px 4px; border-color: #909094 #fff #fff #98989c; font-family: "Liberation Sans", sans-serif; }
.fields { display: grid; grid-template-columns: 237fr 200fr 107fr 87fr 145fr 107fr 106fr 125fr 185fr 192fr 120fr; gap: 5px; }
.field { min-width: 0; }
.field label { display: block; height: 36px; white-space: nowrap; padding-left: 1px; }
.field .strong { font-family: "DejaVu Sans Condensed", sans-serif; font-weight: bold; }
.type { padding-right: 4px; }
.tech { padding-right: 8px; }
.box { display: flex; background: #fff; border: 2px solid #a8a8aa; }
.field .box { height: 49px; }
.box input { flex: 1; width: 0; padding: 0 0 3px 6px; }
.ro, .sunk { border: solid; border-width: 3px 2px 2px 3px; border-color: #909094 #fff #fff #909094; }
.ro { display: block; width: 100%; height: 49px; padding: 0 0 8px 2px; background: #ebe9ed; }
.blue, .drop { flex: none; width: 42px; color: #4a5a80; border: 2px solid #84a8cc; background: linear-gradient(135deg, #d4e0fc, #b0c6f4); box-shadow: inset 0 0 0 2px #fff; margin: -2px -2px -2px 0; }
.blue + .blue { margin-left: 1px; }
.blue svg, .drop svg { width: 20px; height: 14px; }
.blue .lens { width: 28px; height: 28px; }
.spin { flex-direction: column; gap: 5px; }
.drop { width: 36px; margin: 1px; background: linear-gradient(#fff 20%, #c8d8ee 60%, #b0c8e0); }
.status { align-items: stretch; justify-content: space-between; padding-left: 4px; }
.status select { align-self: center; height: 30px; background: #3460ac; color: #fff; padding: 0 1px; }
.blocks { display: grid; grid-template-columns: 672fr 428fr 519fr; gap: 17px; height: 144px; margin: 7px 7px 7px 0; }
.blocks > * { min-width: 0; background: #fdfcfe; }
textarea { display: block; flex: 1; width: 100%; height: 100%; resize: none; overflow: hidden; white-space: pre-wrap; }
.area { padding: 2px; }
.area textarea { padding: 4px; }
.vscroll.mini { flex: none; width: 37px; background: #e8f2fe; }
.mini .thumb { height: 34px; margin-bottom: auto; }
.phones table { border-collapse: collapse; margin: 4px 0 0 19px; }
.phones th, .phones td { padding: 0; height: 33px; line-height: 32px; font-weight: normal; text-align: left; }
.phones th { width: 205px; }
.note { height: 107px; margin-right: 12px; background: #fff; }
.vscroll.faint { justify-content: space-between; color: #c0ccdc; background: #f0f6ff; }
.faint button { border-color: #d0dcec; background: #e0ecfc; }

/* Player */
.player { display: flex; height: 41px; background: linear-gradient(#b4b4b2, #a8a8a4 50%, #989894 51%, #9c9c98); border-bottom: 2px solid #4c4c48; }
.player button { flex: none; width: 60px; border-right: 3px solid #50504c; border-radius: 0 8px 8px 0; box-shadow: inset 2px 2px 0 #cccccb; fill: #484644; }
.player svg { width: 24px; height: 22px; }
.player .seek { width: 36px; height: 20px; }
.player .moon { width: 30px; height: 28px; }
.track { flex: 1; display: flex; align-items: center; margin: 0 15px 0 22px; }
.groove { height: 20px; background: #000; border: 2px solid #444; box-shadow: inset 0 3px 0 #fff, inset 0 -4px 0 #d0d0d0; }
.before { flex: 590; border-radius: 4px 0 0 4px; border-left-color: #fff; }
.after { flex: 645; border-radius: 0 5px 5px 0; border-right-color: #fff; }
.handle { width: 20px; align-self: stretch; background: #9c9c98; border: solid; border-width: 0 3px 0 2px; border-color: #444 #333 #444 #ccc; }
.time { width: 208px; display: flex; align-items: center; justify-content: center; border-right: 3px solid #50504c; }
.time output { width: 170px; height: 26px; background: #fff; border: 2px solid #555; border-radius: 4px; text-align: center; font: 22px/23px "DejaVu Sans", sans-serif; }
```
